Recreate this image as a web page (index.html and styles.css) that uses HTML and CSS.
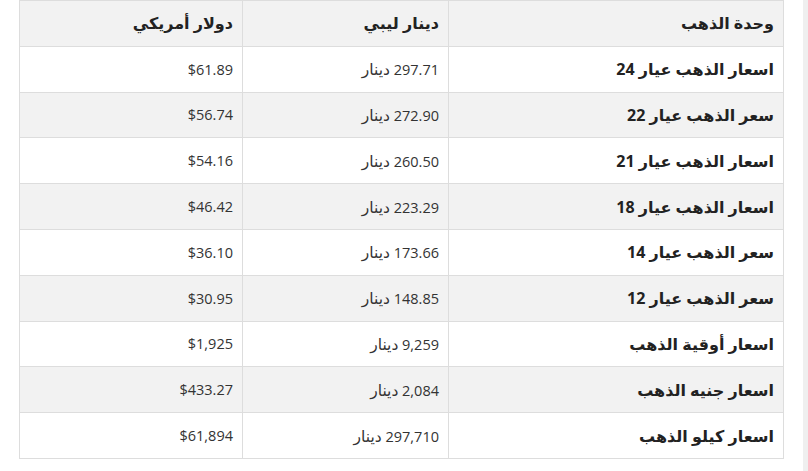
FILE: index.html
```html
<!DOCTYPE html>
<html lang="ar">
<head>
<meta charset="utf-8">
<link rel="stylesheet" href="styles.css">
</head>
<body>
<div class="page">
  <div class="content">
    <table class="prices" dir="rtl">
      <colgroup>
        <col class="c-unit"><col class="c-lyd"><col class="c-usd">
      </colgroup>
      <thead>
        <tr><th>وحدة الذهب</th><th>دينار ليبي</th><th>دولار أمريكي</th></tr>
      </thead>
      <tbody>
        <tr><td class="label">اسعار الذهب عيار 24</td><td>297.71 <span class="ar">دينار</span></td><td>$61.89</td></tr>
        <tr><td class="label">سعر الذهب عيار 22</td><td>272.90 <span class="ar">دينار</span></td><td>$56.74</td></tr>
        <tr><td class="label">اسعار الذهب عيار 21</td><td>260.50 <span class="ar">دينار</span></td><td>$54.16</td></tr>
        <tr><td class="label">اسعار الذهب عيار 18</td><td>223.29 <span class="ar">دينار</span></td><td>$46.42</td></tr>
        <tr><td class="label">سعر الذهب عيار 14</td><td>173.66 <span class="ar">دينار</span></td><td>$36.10</td></tr>
        <tr><td class="label">سعر الذهب عيار 12</td><td>148.85 <span class="ar">دينار</span></td><td>$30.95</td></tr>
        <tr><td class="label">اسعار أوقية الذهب</td><td>9,259 <span class="ar">دينار</span></td><td>$1,925</td></tr>
        <tr><td class="label">اسعار جنيه الذهب</td><td>2,084 <span class="ar">دينار</span></td><td>$433.27</td></tr>
        <tr><td class="label">اسعار كيلو الذهب</td><td>297,710 <span class="ar">دينار</span></td><td>$61,894</td></tr>
      </tbody>
    </table>
  </div>
  <div class="track"></div>
</div>
</body>
</html>
```
FILE: styles.css
```css
html, body {
  margin: 0;
  padding: 0;
  background: #fff;
}
.page {
  display: flex;
  flex-direction: row;
  width: 808px;
  height: 471px;
  overflow: hidden;
}
.content {
  flex: 1;
  padding-left: 19px;
}
.track {
  width: 5px;
  height: 471px;
  background: #efefef;
  flex: none;
}
.prices {
  border-collapse: collapse;
  width: 764px;
  font-family: "Open Sans", "DejaVu Sans", sans-serif;
  font-size: 14.5px;
  color: #333;
  table-layout: fixed;
}
.c-unit { width: 335px; }
.c-lyd { width: 206px; }
.c-usd { width: 223px; }
.prices th, .prices td {
  border: 1px solid #dddddd;
  height: 45.8px;
  padding: 0 9px;
  text-align: right;
  vertical-align: middle;
  box-sizing: border-box;
}
.prices th {
  background: #f2f2f2;
  font-weight: bold;
  font-size: 16px;
  color: #222;
}
.prices td.label {
  font-weight: bold;
  font-size: 16px;
  color: #222;
}
.prices .ar {
  font-size: 15.5px;
}
.prices tbody tr:nth-child(even) td {
  background: #f2f2f2;
}
```
